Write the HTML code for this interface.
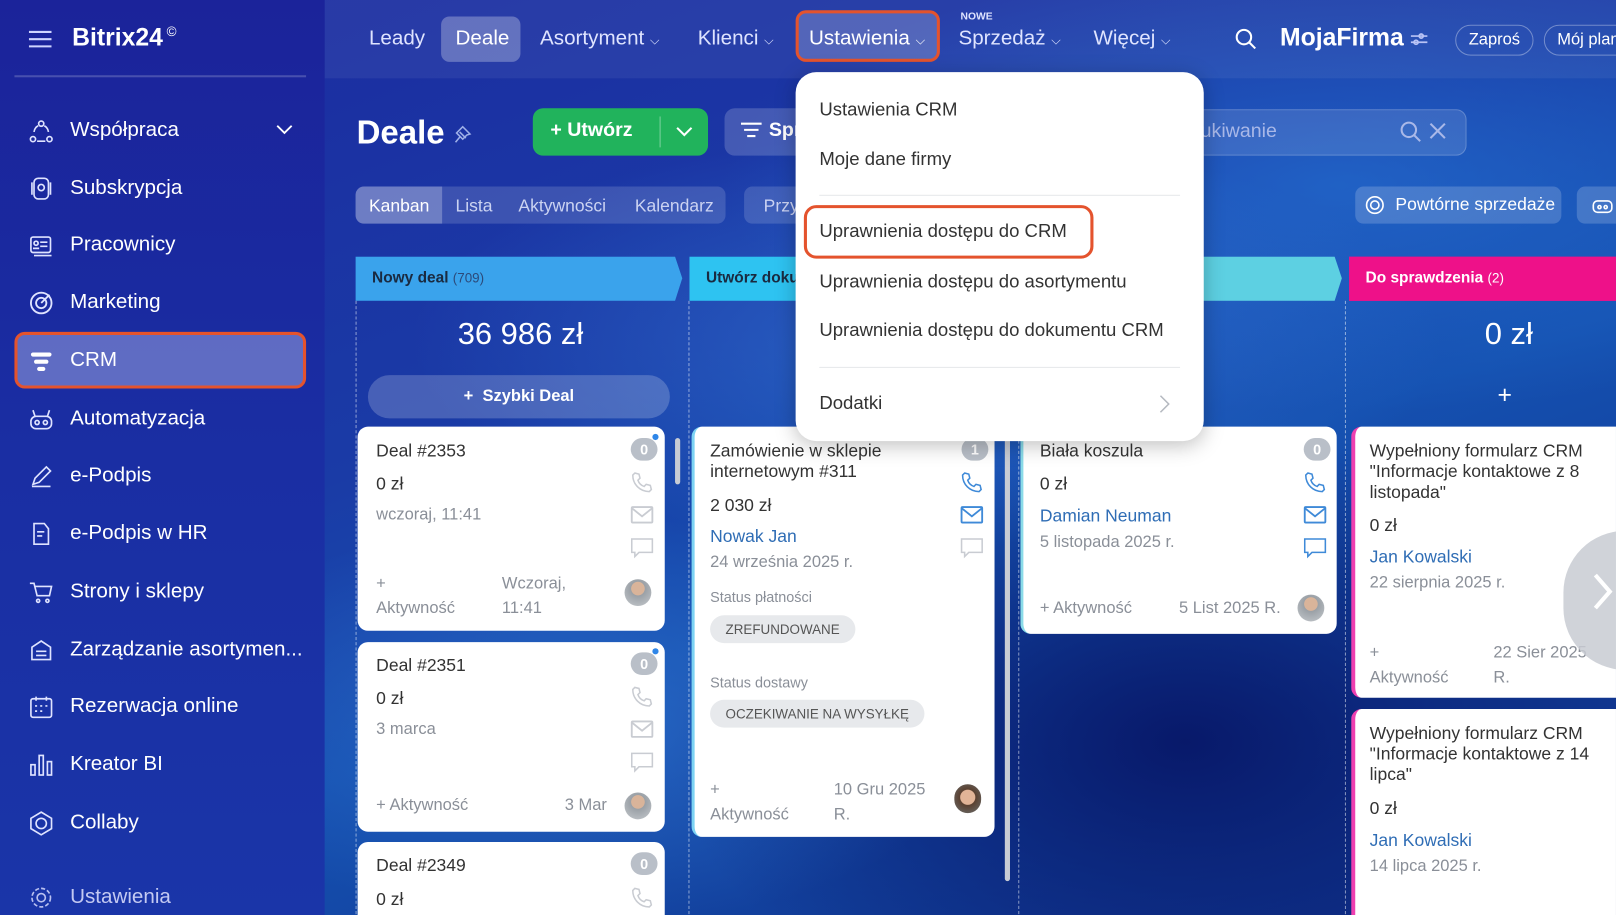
<!DOCTYPE html>
<html><head><meta charset="utf-8"><style>
*{box-sizing:border-box;margin:0;padding:0}
html,body{width:1616px;height:915px;overflow:hidden;background:#13288e}
body{font-family:"Liberation Sans",sans-serif}
#w{position:absolute;left:0;top:0;width:1568px;height:888px;transform:scale(1.0306);transform-origin:0 0;overflow:hidden;
background:radial-gradient(ellipse 500px 200px at 900px 330px,rgba(60,140,230,.45),transparent),
radial-gradient(ellipse 600px 220px at 1300px 180px,rgba(40,130,225,.5),transparent),
radial-gradient(ellipse 400px 200px at 560px 700px,rgba(60,130,220,.45),transparent),
radial-gradient(ellipse 500px 300px at 1150px 720px,#08196a,transparent),
linear-gradient(160deg,#1c2aa0 0%,#1a3ba6 40%,#1550b0 60%,#0f2f88 100%)}
.a{position:absolute;white-space:nowrap}
#side{position:absolute;left:0;top:0;width:315px;height:888px;background:linear-gradient(180deg,#1b239a,#1a2ea3 50%,#1a35a8)}
.mi{position:absolute;left:68px;color:#fff;font-size:20px}
.ic{position:absolute;left:28px;width:24px;height:24px}
.nav{position:absolute;top:26px;color:#dfe4ff;font-size:20px}
.card{position:absolute;background:#fff;border-radius:10px}
.t{color:#333;font-size:17px}
.g{color:#8a8f98;font-size:16px}
.l{color:#2f6db5;font-size:17px}
.badge{position:absolute;width:26px;height:22px;border-radius:11px;background:#b9bfc8;color:#fff;font-size:14px;font-weight:bold;text-align:center;line-height:22px}
.dd{position:absolute;left:795px;color:#333;font-size:18px}
.chip{position:absolute;background:#e7e9ec;border-radius:14px;color:#555;font-size:13px;height:27px;line-height:27px;padding:0 15px}
</style></head><body><div id="w">
<div style="position:absolute;left:315px;top:0;width:1253px;height:76px;background:rgba(255,255,255,.06)"></div>
<div id="side"></div>
<svg class="a" style="left:28px;top:29px" width="22" height="18"><path d="M0 2h22M0 9h22M0 16h22" stroke="#cfd4ff" stroke-width="2"/></svg>
<div class="a" style="left:70px;top:23px;color:#fff;font-size:24px;font-weight:bold">Bitrix24<span style="font-size:13px;vertical-align:top;font-weight:normal"> ©</span></div>
<div class="a" style="left:14px;top:73px;width:283px;height:2px;background:rgba(255,255,255,.2)"></div>
<div class="a" style="left:14px;top:322px;width:283px;height:55px;border-radius:10px;background:rgba(125,135,210,.7);border:3px solid #e4532d"></div>
<svg class="ic" style="top:116px" viewBox="0 0 24 24" fill="none" stroke="#dfe3ff" stroke-width="1.6"><circle cx="12" cy="4" r="2.5"/><circle cx="4" cy="19" r="2.5"/><circle cx="20" cy="19" r="2.5"/><path d="M5 12a8 8 0 0 1 4-6M15 6a8 8 0 0 1 4 6M8 21h8"/></svg>
<div class="mi" style="top:115px">Współpraca</div>
<svg class="a" style="left:268px;top:121px" width="16" height="10"><path d="M1 1l7 7 7-7" stroke="#fff" stroke-width="1.8" fill="none"/></svg>
<svg class="ic" style="top:171px" viewBox="0 0 24 24" fill="none" stroke="#dfe3ff" stroke-width="1.6"><rect x="5" y="2" width="14" height="20" rx="4"/><circle cx="12" cy="11" r="3"/><path d="M3 6v12M21 6v12"/></svg>
<div class="mi" style="top:171px">Subskrypcja</div>
<svg class="ic" style="top:226px" viewBox="0 0 24 24" fill="none" stroke="#dfe3ff" stroke-width="1.6"><rect x="2" y="4" width="19" height="15" rx="2"/><circle cx="7" cy="10" r="2"/><path d="M11 9h7M11 13h7M4 15h6M5 22h17"/></svg>
<div class="mi" style="top:226px">Pracownicy</div>
<svg class="ic" style="top:282px" viewBox="0 0 24 24" fill="none" stroke="#dfe3ff" stroke-width="1.8"><circle cx="12" cy="12" r="10"/><circle cx="12" cy="12" r="5"/><path d="M12 12l8-8"/></svg>
<div class="mi" style="top:282px">Marketing</div>
<svg class="ic" style="top:339px" viewBox="0 0 24 24"><rect x="2" y="3" width="20" height="4" rx="2" fill="#fff"/><rect x="5" y="10" width="14" height="4" rx="2" fill="#fff"/><rect x="8" y="17" width="8" height="4" rx="2" fill="#fff"/></svg>
<div class="mi" style="top:338px">CRM</div>
<svg class="ic" style="top:395px" viewBox="0 0 24 24" fill="none" stroke="#dfe3ff" stroke-width="1.6"><rect x="2" y="9" width="20" height="12" rx="5"/><circle cx="8" cy="15" r="2"/><circle cx="16" cy="15" r="2"/><path d="M6 9L4 3M18 9l2-6"/></svg>
<div class="mi" style="top:395px">Automatyzacja</div>
<svg class="ic" style="top:450px" viewBox="0 0 24 24" fill="none" stroke="#dfe3ff" stroke-width="1.6"><path d="M4 20l2-6L17 3l4 4-11 11zM3 22h18"/></svg>
<div class="mi" style="top:450px">e-Podpis</div>
<svg class="ic" style="top:506px" viewBox="0 0 24 24" fill="none" stroke="#dfe3ff" stroke-width="1.6"><path d="M15 2H5v20h14V7zM8 10h7M8 14h5"/></svg>
<div class="mi" style="top:506px">e-Podpis w HR</div>
<svg class="ic" style="top:563px" viewBox="0 0 24 24" fill="none" stroke="#dfe3ff" stroke-width="1.6"><path d="M1 3h4l3 12h12l2-9H6"/><circle cx="9" cy="20" r="1.5"/><circle cx="18" cy="20" r="1.5"/></svg>
<div class="mi" style="top:563px">Strony i sklepy</div>
<svg class="ic" style="top:619px" viewBox="0 0 24 24" fill="none" stroke="#dfe3ff" stroke-width="1.6"><path d="M3 9l9-6 9 6v12H3zM7 13h10M7 17h10"/></svg>
<div class="mi" style="top:619px">Zarządzanie asortymen...</div>
<svg class="ic" style="top:674px" viewBox="0 0 24 24" fill="none" stroke="#dfe3ff" stroke-width="1.6"><rect x="2" y="4" width="20" height="18" rx="2"/><path d="M7 2v4M17 2v4M6 11h2M11 11h2M16 11h2M6 16h2M11 16h2"/></svg>
<div class="mi" style="top:674px">Rezerwacja online</div>
<svg class="ic" style="top:730px" viewBox="0 0 24 24" fill="none" stroke="#dfe3ff" stroke-width="1.6"><rect x="2" y="12" width="4" height="10"/><rect x="10" y="3" width="4" height="19"/><rect x="18" y="9" width="4" height="13"/></svg>
<div class="mi" style="top:730px">Kreator BI</div>
<svg class="ic" style="top:787px" viewBox="0 0 24 24" fill="none" stroke="#dfe3ff" stroke-width="1.6"><path d="M12 1l10 6v10l-10 6-10-6V7z"/><circle cx="12" cy="12" r="5"/></svg>
<div class="mi" style="top:787px">Collaby</div>
<svg class="ic" style="top:859px" viewBox="0 0 24 24" fill="none" stroke="#b9c0f0" stroke-width="1.6"><circle cx="12" cy="12" r="4"/><circle cx="12" cy="12" r="9" stroke-dasharray="4 2"/></svg>
<div class="mi" style="top:859px;color:#c3c9f2">Ustawienia</div>

<div class="a" style="left:428px;top:16px;width:77px;height:44px;border-radius:8px;background:rgba(255,255,255,.28)"></div>
<div class="nav" style="left:358px">Leady</div>
<div class="nav" style="left:442px;color:#fff">Deale</div>
<div class="nav" style="left:524px">Asortyment <span style="font-size:12px">⌵</span></div>
<div class="nav" style="left:677px">Klienci <span style="font-size:12px">⌵</span></div>
<div class="a" style="left:772px;top:10px;width:140px;height:50px;border-radius:10px;border:3px solid #e4532d;background:rgba(255,255,255,.2)"></div>
<div class="nav" style="left:785px;color:#fff">Ustawienia <span style="font-size:12px">⌵</span></div>
<div class="a" style="left:932px;top:11px;color:#dfe4ff;font-size:10px;font-weight:bold">NOWE</div>
<div class="nav" style="left:930px">Sprzedaż <span style="font-size:12px">⌵</span></div>
<div class="nav" style="left:1061px">Więcej <span style="font-size:12px">⌵</span></div>
<svg class="a" style="left:1198px;top:27px" width="22" height="22" fill="none" stroke="#fff" stroke-width="2"><circle cx="9" cy="9" r="7"/><path d="M14 14l6 6"/></svg>
<div class="a" style="left:1242px;top:23px;color:#fff;font-size:24px;font-weight:bold">MojaFirma</div>
<svg class="a" style="left:1368px;top:31px" width="18" height="14" stroke="#b9c3f5" stroke-width="1.6" fill="none"><path d="M1 4h16M1 10h16"/><circle cx="11" cy="4" r="2"/><circle cx="6" cy="10" r="2"/></svg>
<div class="a" style="left:1412px;top:24px;width:76px;height:30px;border-radius:15px;border:1px solid rgba(255,255,255,.35);color:#fff;font-size:16px;text-align:center;line-height:28px">Zaproś</div>
<div class="a" style="left:1498px;top:24px;width:90px;height:30px;border-radius:15px;border:1px solid rgba(255,255,255,.35);color:#fff;font-size:16px;padding-left:12px;line-height:28px">Mój plan</div>

<div class="a" style="left:346px;top:110px;color:#fff;font-size:32px;font-weight:bold">Deale</div>
<svg class="a" style="left:440px;top:120px" width="18" height="20" fill="none" stroke="#9fb0e8" stroke-width="1.5"><path d="M2 18l5-6M6 8l6 6M9 3l7 7-3 1-4 4-3-3-3-3 4-4z"/></svg>
<div class="a" style="left:517px;top:105px;width:170px;height:46px;border-radius:10px;background:#21b35c"></div>
<div class="a" style="left:534px;top:116px;color:#fff;font-size:19px;font-weight:bold">+ Utwórz</div>
<div class="a" style="left:640px;top:113px;width:1px;height:30px;background:rgba(255,255,255,.4)"></div>
<svg class="a" style="left:656px;top:123px" width="16" height="10"><path d="M1 1l7 7 7-7" stroke="#fff" stroke-width="2" fill="none"/></svg>
<div class="a" style="left:703px;top:105px;width:120px;height:46px;border-radius:10px;background:rgba(255,255,255,.18)"></div>
<svg class="a" style="left:718px;top:118px" width="22" height="20" fill="none" stroke="#fff" stroke-width="2"><path d="M1 2h20M4 8h14M7 14h8"/></svg>
<div class="a" style="left:746px;top:116px;color:#fff;font-size:19px;font-weight:bold">Sprzedaż</div>
<div class="a" style="left:1100px;top:106px;width:323px;height:45px;border-radius:10px;background:rgba(255,255,255,.12);border:1px solid rgba(255,255,255,.2)"></div>
<div class="a" style="left:1165px;top:117px;color:#a9b8e8;font-size:19px">ukiwanie</div>
<svg class="a" style="left:1358px;top:117px" width="50" height="24" fill="none" stroke="#a9b8e8" stroke-width="2"><circle cx="9" cy="9" r="7"/><path d="M14 14l6 6M30 3l14 14M44 3L30 17"/></svg>

<div class="a" style="left:345px;top:181px;width:359px;height:36px;border-radius:8px;background:rgba(255,255,255,.15)"></div>
<div class="a" style="left:345px;top:181px;width:84px;height:36px;border-radius:8px 0 0 8px;background:rgba(255,255,255,.25)"></div>
<div class="a" style="left:358px;top:190px;color:#fff;font-size:17px">Kanban</div>
<div class="a" style="left:442px;top:190px;color:#cbd3f2;font-size:17px">Lista</div>
<div class="a" style="left:503px;top:190px;color:#cbd3f2;font-size:17px">Aktywności</div>
<div class="a" style="left:616px;top:190px;color:#cbd3f2;font-size:17px">Kalendarz</div>
<div class="a" style="left:722px;top:181px;width:100px;height:36px;border-radius:8px;background:rgba(255,255,255,.15)"></div>
<div class="a" style="left:741px;top:190px;color:#cbd3f2;font-size:17px">Przy</div>
<div class="a" style="left:1315px;top:181px;width:200px;height:36px;border-radius:8px;background:rgba(255,255,255,.18)"></div>
<svg class="a" style="left:1324px;top:189px" width="20" height="20" fill="none" stroke="#fff" stroke-width="1.6"><circle cx="10" cy="10" r="8"/><circle cx="10" cy="10" r="4"/></svg>
<div class="a" style="left:1354px;top:189px;color:#fff;font-size:17px">Powtórne sprzedaże</div>
<div class="a" style="left:1530px;top:181px;width:60px;height:36px;border-radius:8px;background:rgba(255,255,255,.18)"></div>
<svg class="a" style="left:1545px;top:190px" width="20" height="18" fill="none" stroke="#fff" stroke-width="1.6"><rect x="1" y="5" width="18" height="11" rx="4"/><circle cx="7" cy="11" r="1.5"/><circle cx="13" cy="11" r="1.5"/></svg>

<svg class="a" style="left:345px;top:249px" width="960" height="43"><path d="M0 0h310l7 21-7 22H0z" fill="#3aa3ec"/><path d="M324 0h310l7 21-7 22H324z" fill="#2ec3f1"/><path d="M644 0h306l7 21-7 22H644z" fill="#5dd0e2"/></svg>
<div class="a" style="left:1309px;top:249px;width:259px;height:43px;background:#ee1189"></div>
<div class="a" style="left:361px;top:261px;color:#1a2a40;font-size:15px;font-weight:bold">Nowy deal <span style="font-weight:normal;color:#2c4a7a;font-size:13px">(709)</span></div>
<div class="a" style="left:685px;top:261px;color:#1a2a40;font-size:15px;font-weight:bold">Utwórz dokument</div>
<div class="a" style="left:1325px;top:261px;color:#fff;font-size:15px;font-weight:bold">Do sprawdzenia <span style="font-weight:normal;font-size:13px">(2)</span></div>
<div class="a" style="left:345px;top:292px;height:600px;border-left:1px dashed rgba(255,255,255,.5)"></div>
<div class="a" style="left:668px;top:292px;height:600px;border-left:1px dashed rgba(255,255,255,.5)"></div>
<div class="a" style="left:988px;top:292px;height:600px;border-left:1px dashed rgba(255,255,255,.5)"></div>
<div class="a" style="left:1305px;top:292px;height:600px;border-left:1px dashed rgba(255,255,255,.5)"></div>
<div class="a" style="left:345px;top:308px;width:320px;text-align:center;color:#fff;font-size:30px">36 986 zł</div>
<div class="a" style="left:1309px;top:308px;width:310px;text-align:center;color:#fff;font-size:30px">0 zł</div>
<div class="a" style="left:1453px;top:370px;color:#fff;font-size:24px">+</div>
<div class="a" style="left:357px;top:364px;width:293px;height:42px;border-radius:21px;background:rgba(255,255,255,.2);color:#fff;font-size:16px;font-weight:bold;text-align:center;line-height:42px">+&nbsp; Szybki Deal</div>
<div class="a" style="left:655px;top:425px;width:5px;height:45px;border-radius:3px;background:#c8ccd4"></div>
<div class="a" style="left:975px;top:425px;width:5px;height:430px;border-radius:3px;background:#c8ccd4"></div>

<div class="card" style="left:347px;top:414px;width:298px;height:198px"></div>
<div class="a t" style="left:365px;top:428px">Deal #2353</div>
<div class="badge" style="left:612px;top:425px">0</div><div class="a" style="left:633px;top:421px;width:6px;height:6px;border-radius:3px;background:#2f86e8"></div>
<div class="a t" style="left:365px;top:460px">0 zł</div>
<div class="a g" style="left:365px;top:491px">wczoraj, 11:41</div>
<div class="a g" style="left:365px;top:555px;line-height:24px">+<br>Aktywność</div>
<div class="a g" style="left:487px;top:555px;line-height:24px">Wczoraj,<br>11:41</div>

<div class="card" style="left:347px;top:623px;width:298px;height:184px"></div>
<div class="a t" style="left:365px;top:636px">Deal #2351</div>
<div class="badge" style="left:612px;top:633px">0</div><div class="a" style="left:633px;top:629px;width:6px;height:6px;border-radius:3px;background:#2f86e8"></div>
<div class="a t" style="left:365px;top:668px">0 zł</div>
<div class="a g" style="left:365px;top:699px">3 marca</div>
<div class="a g" style="left:365px;top:773px">+ Aktywność</div>
<div class="a g" style="left:548px;top:773px">3 Mar</div>

<div class="card" style="left:347px;top:817px;width:298px;height:90px"></div>
<div class="a t" style="left:365px;top:830px">Deal #2349</div>
<div class="badge" style="left:612px;top:827px">0</div>
<div class="a t" style="left:365px;top:863px">0 zł</div>

<div class="card" style="left:671px;top:414px;width:294px;height:398px;border-left:3px solid #7dd3f3"></div>
<div class="a t" style="left:689px;top:428px;line-height:20px">Zamówienie w sklepie<br>internetowym #311</div>
<div class="badge" style="left:933px;top:425px">1</div>
<div class="a t" style="left:689px;top:481px">2 030 zł</div>
<div class="a l" style="left:689px;top:511px">Nowak Jan</div>
<div class="a g" style="left:689px;top:537px">24 września 2025 r.</div>
<div class="a g" style="left:689px;top:571px;font-size:14px">Status płatności</div>
<div class="chip" style="left:689px;top:597px">ZREFUNDOWANE</div>
<div class="a g" style="left:689px;top:654px;font-size:14px">Status dostawy</div>
<div class="chip" style="left:689px;top:679px">OCZEKIWANIE NA WYSYŁKĘ</div>
<div class="a g" style="left:689px;top:755px;line-height:24px">+<br>Aktywność</div>
<div class="a g" style="left:809px;top:755px;line-height:24px">10 Gru 2025<br>R.</div>

<div class="card" style="left:990px;top:414px;width:307px;height:201px;border-left:3px solid #8adbe8"></div>
<div class="a t" style="left:1009px;top:428px">Biała koszula</div>
<div class="badge" style="left:1265px;top:425px">0</div>
<div class="a t" style="left:1009px;top:460px">0 zł</div>
<div class="a l" style="left:1009px;top:491px">Damian Neuman</div>
<div class="a g" style="left:1009px;top:518px">5 listopada 2025 r.</div>
<div class="a g" style="left:1009px;top:582px">+ Aktywność</div>
<div class="a g" style="left:1144px;top:582px">5 List 2025 R.</div>

<div class="card" style="left:1311px;top:414px;width:270px;height:263px;border-left:4px solid #ee3fb0"></div>
<div class="a t" style="left:1329px;top:428px;line-height:20px">Wypełniony formularz CRM<br>"Informacje kontaktowe z 8<br>listopada"</div>
<div class="a t" style="left:1329px;top:500px">0 zł</div>
<div class="a l" style="left:1329px;top:531px">Jan Kowalski</div>
<div class="a g" style="left:1329px;top:557px">22 sierpnia 2025 r.</div>
<div class="a g" style="left:1329px;top:622px;line-height:24px">+<br>Aktywność</div>
<div class="a g" style="left:1449px;top:622px;line-height:24px">22 Sier 2025<br>R.</div>
<div class="card" style="left:1311px;top:688px;width:270px;height:220px;border-left:4px solid #ee3fb0"></div>
<div class="a t" style="left:1329px;top:702px;line-height:20px">Wypełniony formularz CRM<br>"Informacje kontaktowe z 14<br>lipca"</div>
<div class="a t" style="left:1329px;top:775px">0 zł</div>
<div class="a l" style="left:1329px;top:806px">Jan Kowalski</div>
<div class="a g" style="left:1329px;top:832px">14 lipca 2025 r.</div>
<div class="a" style="left:1517px;top:515px;width:120px;height:135px;border-radius:60px;background:rgba(200,203,210,.85)"></div>
<svg class="a" style="left:1545px;top:556px" width="20" height="36"><path d="M3 2l14 16L3 34" stroke="#fff" stroke-width="4" fill="none"/></svg>

<svg width="0" height="0" style="position:absolute"><defs>
<g id="ph"><path d="M5 2l4 1 1 4-2 2c1 3 3 5 6 6l2-2 4 1 1 4-2 2C10 20 3 13 3 4z" fill="none" stroke-width="1.5"/></g>
<g id="ml"><rect x="2" y="4" width="20" height="15" rx="1" fill="none" stroke-width="1.8"/><path d="M2 5l10 8 10-8" fill="none" stroke-width="1.8"/></g>
<g id="ch"><path d="M2 3h20v13H9l-4 4v-4H2z" fill="none" stroke-width="1.5"/></g>
</defs></svg>
<svg class="a" style="left:611px;top:457px" width="24" height="24" stroke="#c9ccd2"><use href="#ph"/></svg>
<svg class="a" style="left:611px;top:488px" width="24" height="24" stroke="#c9ccd2"><use href="#ml"/></svg>
<svg class="a" style="left:611px;top:520px" width="24" height="24" stroke="#c9ccd2"><use href="#ch"/></svg>
<svg class="a" style="left:611px;top:665px" width="24" height="24" stroke="#c9ccd2"><use href="#ph"/></svg>
<svg class="a" style="left:611px;top:696px" width="24" height="24" stroke="#c9ccd2"><use href="#ml"/></svg>
<svg class="a" style="left:611px;top:728px" width="24" height="24" stroke="#c9ccd2"><use href="#ch"/></svg>
<svg class="a" style="left:611px;top:860px" width="24" height="24" stroke="#c9ccd2"><use href="#ph"/></svg>
<svg class="a" style="left:931px;top:457px" width="24" height="24" stroke="#3f8ad8"><use href="#ph"/></svg>
<svg class="a" style="left:931px;top:488px" width="24" height="24" stroke="#3f8ad8"><use href="#ml"/></svg>
<svg class="a" style="left:931px;top:520px" width="24" height="24" stroke="#c9ccd2"><use href="#ch"/></svg>
<svg class="a" style="left:1264px;top:457px" width="24" height="24" stroke="#3f8ad8"><use href="#ph"/></svg>
<svg class="a" style="left:1264px;top:488px" width="24" height="24" stroke="#3f8ad8"><use href="#ml"/></svg>
<svg class="a" style="left:1264px;top:520px" width="24" height="24" stroke="#3f8ad8"><use href="#ch"/></svg>
<div class="a" style="left:606px;top:562px;width:26px;height:26px;border-radius:13px;background:radial-gradient(circle at 50% 35%,#d9b49a 30%,#9aa0a6 32%,#c5c9cd)"></div>
<div class="a" style="left:606px;top:769px;width:26px;height:26px;border-radius:13px;background:radial-gradient(circle at 50% 35%,#d9b49a 30%,#9aa0a6 32%,#c5c9cd)"></div>
<div class="a" style="left:926px;top:761px;width:26px;height:28px;border-radius:13px;background:radial-gradient(circle at 50% 45%,#e2b497 35%,#5a4030 38%,#6b7070)"></div>
<div class="a" style="left:1259px;top:577px;width:26px;height:26px;border-radius:13px;background:radial-gradient(circle at 50% 35%,#d9b49a 30%,#9aa0a6 32%,#c5c9cd)"></div>

<div class="a" style="left:772px;top:70px;width:396px;height:358px;border-radius:20px;background:#fff;box-shadow:0 4px 20px rgba(0,0,0,.25)"></div>
<div class="dd" style="top:96px">Ustawienia CRM</div>
<div class="dd" style="top:144px">Moje dane firmy</div>
<div class="a" style="left:795px;top:189px;width:350px;height:1px;background:#e6e8eb"></div>
<div class="a" style="left:780px;top:199px;width:281px;height:52px;border-radius:12px;border:3px solid #e4532d"></div>
<div class="dd" style="top:214px">Uprawnienia dostępu do CRM</div>
<div class="dd" style="top:263px">Uprawnienia dostępu do asortymentu</div>
<div class="dd" style="top:310px">Uprawnienia dostępu do dokumentu CRM</div>
<div class="a" style="left:795px;top:356px;width:350px;height:1px;background:#e6e8eb"></div>
<div class="dd" style="top:381px">Dodatki</div>
<svg class="a" style="left:1124px;top:382px" width="12" height="20"><path d="M2 2l8 8-8 8" stroke="#b5b9c0" stroke-width="1.5" fill="none"/></svg>
</div></body></html>
